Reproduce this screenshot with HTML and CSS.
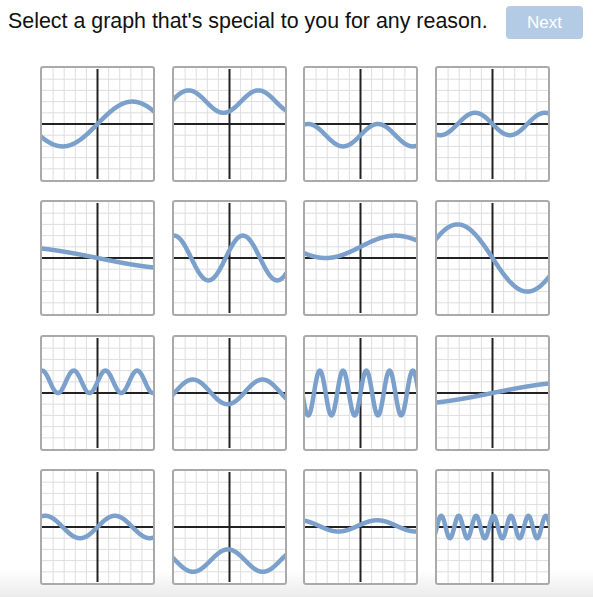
FILE: index.html
```html
<!DOCTYPE html>
<html lang="en">
<head>
<meta charset="utf-8">
<title>Select a graph</title>
<link rel="stylesheet" href="styles.css">
</head>
<body>
<header class="top">
  <h1 class="prompt">Select a graph that's special to you for any reason.</h1>
  <button class="next" type="button" disabled>Next</button>
</header>
<main class="graphs" id="graphs"></main>
<script src="script.js"></script>
</body>
</html>
```

FILE: styles.css
```css
html, body {
  margin: 0;
  padding: 0;
}
body {
  min-height: 100vh;
  font-family: "Liberation Sans", Arial, sans-serif;
  color: #111;
  background: linear-gradient(to bottom, #ffffff 0, #ffffff 570px, #ebebeb 597px);
}
.top {
  display: flex;
  align-items: flex-start;
  justify-content: space-between;
  box-sizing: border-box;
  height: 60px;
  padding: 6px 10px 0 8px;
}
.prompt {
  margin: 3px 0 0 0;
  font-size: 21.4px;
  font-weight: normal;
  line-height: 24px;
  color: #111;
}
.next {
  width: 77px;
  height: 33px;
  padding: 0;
  border: 0;
  border-radius: 4px;
  background: #b3cbe4;
  color: #fff;
  font-family: "Liberation Sans", Arial, sans-serif;
  font-size: 17px;
}
.graphs {
  display: grid;
  grid-template-columns: repeat(4, 115px);
  grid-auto-rows: 116px;
  column-gap: 16.5px;
  row-gap: 18.3px;
  padding: 6px 0 0 40px;
}
.tile {
  box-sizing: border-box;
  border: 2px solid #aaaaaa;
  border-radius: 3px;
  background: #fff;
  overflow: hidden;
}
.tile svg {
  display: block;
  width: 111px;
  height: 112px;
}
.grid-lines {
  stroke: #dedede;
  stroke-width: 1;
  fill: none;
}
.axes {
  stroke: #222;
  stroke-width: 2;
  fill: none;
}
.curve {
  stroke: #7ba0cb;
  stroke-width: 4.5;
  fill: none;
  stroke-linejoin: round;
  stroke-linecap: round;
}
```

FILE: script.js
```js
(function () {
  var fns = [
    function (x) { return 2 * Math.sin(x / 2); },
    function (x) { return 2 + Math.cos(x - 2.6); },
    function (x) { return -1 + Math.sin(x); },
    function (x) { return -Math.sin(x); },

    function (x) { return -Math.sin(x / 5); },
    function (x) { return 2 * Math.cos(Math.PI * (x + 5) / 3.1); },
    function (x) { return 1 + Math.sin(x / 2); },
    function (x) { return -3 * Math.sin(x / 2); },

    function (x) { return 1 + Math.sin(2.2 * x); },
    function (x) { return 0.1 + 1.1 * Math.sin(x - 1.4); },
    function (x) { return 2 * Math.sin(3 * x); },
    function (x) { return Math.sin(x / 5); },

    function (x) { return Math.sin(x); },
    function (x) { return -3 - Math.cos(x - 3); },
    function (x) { return 0.1 + 0.5 * Math.cos(0.9 * (x - 1.5)); },
    function (x) { return Math.sin(4 * x + 1.2); }
  ];

  var W = 111, H = 112;
  var ux = W / 10, uy = H / 10;
  var cx = W / 2, cy = H / 2;

  function svgFor(f) {
    var g = '';
    for (var i = 1; i < 10; i++) {
      if (i === 5) continue;
      var x = (i * ux).toFixed(2);
      var y = (i * uy).toFixed(2);
      g += 'M' + x + ' 0V' + H + 'M0 ' + y + 'H' + W;
    }
    var d = '';
    var N = 500;
    for (var k = 0; k <= N; k++) {
      var xu = -5.3 + 10.6 * k / N;
      var px = cx + xu * ux;
      var py = cy - f(xu) * uy;
      d += (k ? 'L' : 'M') + px.toFixed(2) + ' ' + py.toFixed(2);
    }
    return '<svg xmlns="http://www.w3.org/2000/svg" viewBox="0 0 ' + W + ' ' + H + '">' +
      '<path class="grid-lines" d="' + g + '"/>' +
      '<path class="axes" d="M' + cx + ' 1V' + (H - 1) + 'M0 ' + cy + 'H' + W + '"/>' +
      '<path class="curve" d="' + d + '"/>' +
      '</svg>';
  }

  var host = document.getElementById('graphs');
  var html = '';
  for (var i = 0; i < fns.length; i++) {
    html += '<div class="tile">' + svgFor(fns[i]) + '</div>';
  }
  host.innerHTML = html;
})();
```
